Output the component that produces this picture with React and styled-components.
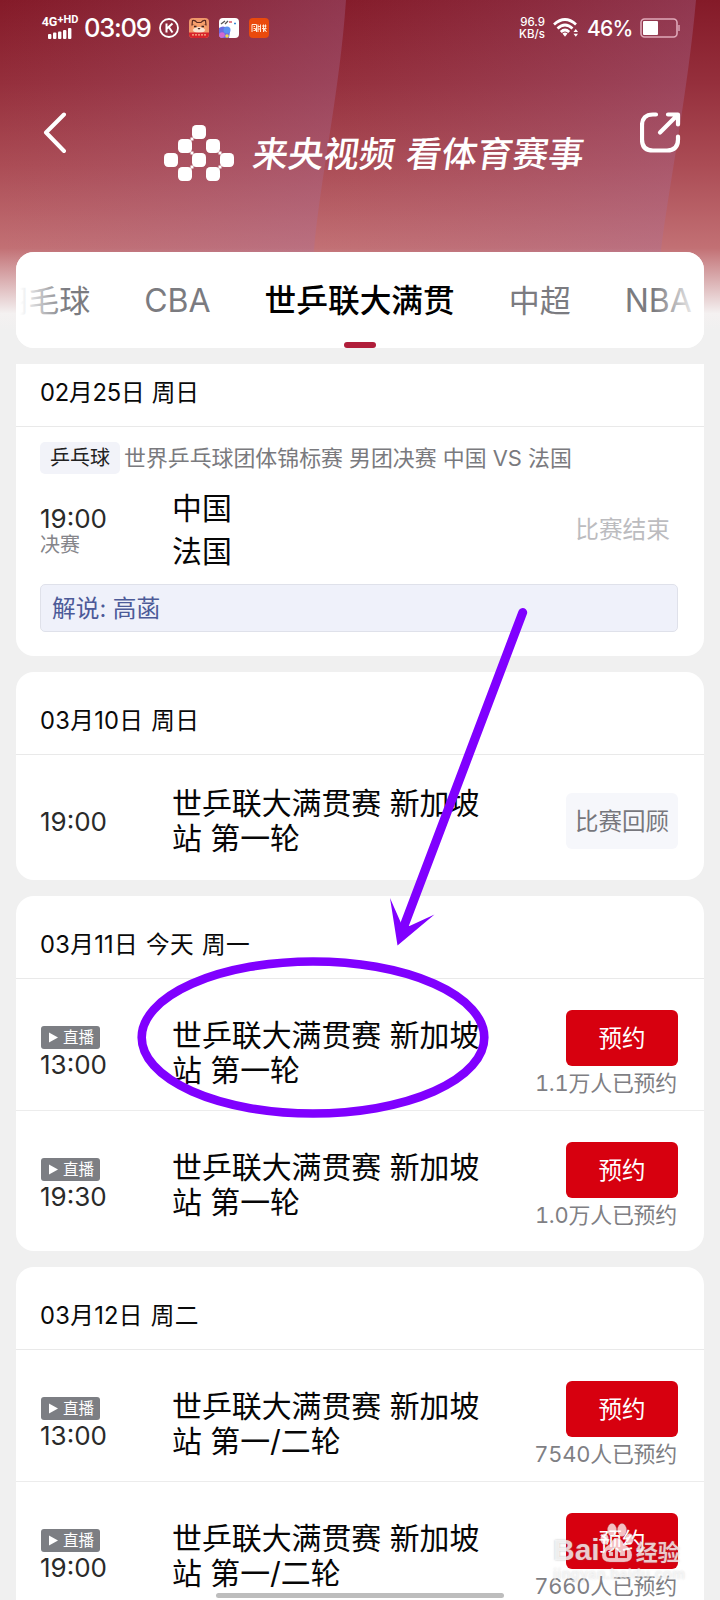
import React from "react"
import styled, { createGlobalStyle, css } from "styled-components"

const GlobalStyle = createGlobalStyle`
  * {
    box-sizing: border-box;
  }
  body {
    margin: 0;
    background: #f0f0f0;
    font-family: Inter, "Noto Sans CJK SC", sans-serif;
    color: #0a0a0a;
  }
`

const Screen = styled.div`
  position: relative;
  width: 720px;
  height: 1600px;
  overflow: hidden;
  display: flex;
  flex-direction: column;
  background: #f0f0f0;
`

const Backdrop = styled.svg`
  position: absolute;
  top: 0;
  left: 0;
`

const StatusBar = styled.div`
  position: relative;
  display: flex;
  align-items: center;
  justify-content: space-between;
  height: 56px;
  padding: 0 40px 0 41px;
  color: #fff;
`

const StatusGroup = styled.div`
  display: flex;
  align-items: center;
  gap: ${(p) => p.$gap}px;
`

const Network = styled.div`
  display: flex;
  flex-direction: column;
  align-items: center;
  width: 38px;
  font: 700 12.5px/12px Roboto, sans-serif;
  white-space: nowrap;
  margin-right: 5px;
`

const NetworkLabel = styled.div`
  display: flex;
  small {
    font-size: 11px;
    line-height: 8px;
  }
`

const Clock = styled.div`
  width: 67px;
  font: 500 25.5px/30px Inter, sans-serif;
  letter-spacing: -1.2px;
  margin-right: 8px;
  white-space: nowrap;
`

const Speed = styled.div`
  font: 500 11.5px/12px Inter, sans-serif;
  text-align: right;
`

const Percent = styled.div`
  font: 500 21px/28px Inter, sans-serif;
  width: 45px;
  letter-spacing: -0.7px;
  padding-top: 1px;
  white-space: nowrap;
`

const Header = styled.header`
  position: relative;
  display: flex;
  align-items: flex-start;
  height: 196px;
  padding: 56px 38px 0 42px;
`

const Brand = styled.div`
  display: flex;
  align-items: flex-start;
  flex: 1;
  padding: 13px 0 0 96px;
`

const Slogan = styled.div`
  margin: 4px 0 0 19px;
  color: #fff;
  font-size: 35.5px;
  line-height: 52px;
  font-weight: 500;
  white-space: nowrap;
  transform: skewX(-8deg);
  word-spacing: 2px;
`

const Tabs = styled.nav`
  position: relative;
  display: flex;
  justify-content: center;
  flex: none;
  gap: 54px;
  height: 96px;
  margin: 0 16px;
  padding-top: 24px;
  border-radius: 18px;
  background: #fff;
  overflow: hidden;
  &::before,
  &::after {
    content: "";
    position: absolute;
    z-index: 1;
    top: 0;
    width: 50px;
    height: 100%;
  }
  &::before {
    left: 0;
    background: linear-gradient(90deg, #fff 8%, rgba(255, 255, 255, 0));
  }
  &::after {
    right: 0;
    background: linear-gradient(270deg, #fff 8%, rgba(255, 255, 255, 0));
  }
`

const Tab = styled.div`
  flex: none;
  position: relative;
  height: 72px;
  font-size: ${(p) => (p.$latin ? 32 : 31)}px;
  line-height: 50px;
  color: #7b7b80;
  &:first-child {
    margin-left: -31px;
  }
  ${(p) =>
    p.$active &&
    css`
      color: #000;
      font-size: 31.7px;
      font-weight: 500;
      &::after {
        content: "";
        position: absolute;
        left: 50%;
        bottom: 0;
        width: 32px;
        height: 6px;
        margin-left: -16px;
        border-radius: 3px;
        background: #b01e3a;
      }
    `}
`

const Schedule = styled.main`
  flex: 1;
  min-height: 0;
  margin: 16px 16px 0;
  overflow: hidden;
`

const Day = styled.section`
  height: ${(p) => p.$height}px;
  margin: ${(p) => (p.$scrolled ? "-20px" : "0")} 0 16px;
  border-radius: 18px;
  background: #fff;
  overflow: hidden;
`

const DayTitle = styled.h2`
  margin: 0;
  height: 83px;
  padding: 32px 24px 0;
  border-bottom: 1px solid #e9e9e9;
  font-size: 23.7px;
  line-height: 34px;
  font-weight: 400;
  letter-spacing: ${(p) => p.$tracking || "-0.2px"};
  word-spacing: 1px;
`

const Match = styled.div`
  display: grid;
  grid-template-columns: 132px 320px 1fr;
  height: ${(p) => p.$height || 131}px;
  padding: 0 26px 0 24px;
  & + & {
    border-top: 1px solid #ececec;
  }
`

const When = styled.div`
  display: flex;
  flex-direction: column;
  align-items: flex-start;
  padding-top: ${(p) => p.$top}px;
`

const Time = styled.div`
  padding-top: 1px;
  font-size: 26px;
  line-height: 30px;
  color: #2a2a2a;
`

const Stage = styled.div`
  font-size: 20px;
  line-height: 22px;
  color: #85858a;
`

const Live = styled.div`
  display: flex;
  align-items: center;
  gap: 5px;
  width: 59px;
  height: 23px;
  padding-left: 8px;
  margin-left: 1px;
  border-radius: 3px;
  background: #7c7e83;
  color: #fff;
  font-size: 15.5px;
  line-height: 24px;
`

const Name = styled.div`
  padding-top: ${(p) => p.$top}px;
  font-size: 29.9px;
  line-height: ${(p) => p.$line || 35}px;
  color: #060606;
  white-space: pre;
`

const Action = styled.div`
  display: flex;
  flex-direction: column;
  align-items: flex-end;
  padding-top: ${(p) => p.$top}px;
`

const Button = styled.div`
  width: 112px;
  height: 56px;
  border-radius: 6px;
  background: ${(p) => (p.$muted ? "#f6f7fb" : "#d7000f")};
  color: ${(p) => (p.$muted ? "#77777d" : "#fff")};
  font-size: 23.5px;
  line-height: 57px;
  text-align: center;
`

const Booked = styled.div`
  padding-right: 1px;
  font-size: 21.9px;
  line-height: 34px;
  font-variant-numeric: tabular-nums;
  letter-spacing: -0.2px;
  color: #7f7f84;
  white-space: nowrap;
`

const Finished = styled.div`
  padding: 2px 8px 0 0;
  font-size: 23.7px;
  line-height: 32px;
  color: #bcbcbf;
`

const EventLine = styled.div`
  display: flex;
  align-items: center;
  gap: 4px;
  padding: 15px 24px 0;
  font-size: 21.9px;
  line-height: 32px;
  color: #7a7a7e;
  white-space: nowrap;
`

const Tag = styled.span`
  width: 80px;
  border-radius: 5px;
  background: #f2f3f9;
  color: #222;
  font-size: 20px;
  text-align: center;
`

const Commentary = styled.div`
  height: 48px;
  margin: 0 26px 0 24px;
  padding-left: 11px;
  border: 1px solid #dfe1ea;
  border-radius: 5px;
  background: #eff1fa;
  color: #4c5a98;
  font-size: 23.7px;
  line-height: 47px;
`

const Annotation = styled.svg`
  position: absolute;
  top: 0;
  left: 0;
`

const Watermark = styled.div`
  position: absolute;
  left: 553px;
  top: 1522px;
  width: 130px;
  color: rgba(255, 255, 255, 0.75);
  text-shadow: 0 0 2px rgba(120, 120, 120, 0.5);
`

const WatermarkRow = styled.div`
  display: flex;
  align-items: flex-end;
  height: 42px;
  font: 700 30px/28px "Liberation Sans", sans-serif;
  span:last-child {
    margin-left: 2px;
    font: 700 22px/27px "Noto Sans CJK SC", sans-serif;
  }
`

const WatermarkUrl = styled.div`
  margin-top: 3px;
  font: 700 14.5px/14px "Liberation Sans", sans-serif;
  letter-spacing: 0.3px;
  color: rgba(255, 255, 255, 0.5);
  text-shadow: 0 0 2px rgba(150, 150, 150, 0.3);
  white-space: nowrap;
`

const HomeBar = styled.div`
  position: absolute;
  left: 216px;
  bottom: 2px;
  width: 288px;
  height: 5px;
  border-radius: 3px;
  background: #bdbdbd;
`

const HeaderBackdrop = () => (
  <Backdrop width="720" height="330" viewBox="0 0 720 330">
    <defs>
      <linearGradient id="base" x1="0" y1="0" x2="0" y2="1">
        <stop offset="0" stopColor="#841a28" />
        <stop offset="0.25" stopColor="#952f3c" />
        <stop offset="0.5" stopColor="#ab4c55" />
        <stop offset="0.75" stopColor="#c27074" />
      </linearGradient>
      <linearGradient id="sheen" x1="0" y1="0" x2="1" y2="0">
        <stop offset="0" stopColor="#a8688c" stopOpacity="0" />
        <stop offset="1" stopColor="#a8709c" stopOpacity="0.34" />
      </linearGradient>
      <linearGradient id="fade" x1="0" y1="0" x2="0" y2="1">
        <stop offset="0" stopColor="#f4f1f1" stopOpacity="0" />
        <stop offset="0.8" stopColor="#f4f1f1" />
        <stop offset="1" stopColor="#f0f0f0" />
      </linearGradient>
    </defs>
    <rect width="720" height="330" fill="url(#base)" />
    <path d="M0 0H346C340 90 320 180 314 250V330H0Z" fill="url(#sheen)" />
    <path d="M346 0H696C688 90 670 180 661 250V330H314V250C320 180 340 90 346 0Z" fill="url(#sheen)" />
    <rect y="248" width="720" height="82" fill="url(#fade)" />
  </Backdrop>
)

const SignalIcon = () => (
  <svg width="24" height="12" viewBox="0 0 24 12" fill="#fff">
    <rect x="0" y="6" width="3.4" height="5" rx="1" />
    <rect x="5" y="4.5" width="3.4" height="6.5" rx="1" />
    <rect x="10" y="3.5" width="3.4" height="7.5" rx="1" />
    <rect x="15" y="2" width="3.4" height="9" rx="1" />
    <rect x="20" y="0" width="3.4" height="11" rx="1" />
  </svg>
)

const CircleKIcon = () => (
  <svg width="20" height="20" viewBox="0 0 20 20" fill="none" stroke="#fff">
    <circle cx="10" cy="10" r="9" strokeWidth="1.8" />
    <path d="M7.5 5.5V14.5M13.5 5.5L8 10.5M9.8 9L13.5 14.5" strokeWidth="2" />
  </svg>
)

const FoxAppIcon = () => (
  <svg width="20" height="20" viewBox="0 0 20 20">
    <rect width="20" height="20" rx="4" fill="#f0986a" />
    <path d="M3 7L3.5 2.5Q6 2 8 4.5H12Q14 2 16.5 2.5L17 7Z" fill="#f7a06c" stroke="#5a2b20" strokeWidth="1.2" />
    <ellipse cx="10" cy="10" rx="7.5" ry="5" fill="#f7a06c" />
    <ellipse cx="10" cy="12" rx="6" ry="3" fill="#fbe3d0" />
    <path d="M5 8.5h2.5M12.5 8.5h2.5" stroke="#3b2220" strokeWidth="1.3" />
    <path d="M8.5 10h3L10 11.8Z" fill="#3b2220" />
    <path d="M0 14.5H20V16Q20 20 16 20H4Q0 20 0 16Z" fill="#d8232b" />
    <path d="M3 16.8h14" stroke="#f6b98c" strokeWidth="1.3" strokeDasharray="2 1" />
  </svg>
)

const PaletteAppIcon = () => (
  <svg width="20" height="20" viewBox="0 0 20 20">
    <rect width="20" height="20" rx="4" fill="#fff" />
    <path d="M0 10Q4 7 8 10L11 14L10 20H4Q0 20 0 16Z" fill="#6a6ce0" />
    <circle cx="8" cy="12" r="3.5" fill="#5a92f0" />
    <circle cx="3" cy="17" r="2.8" fill="#d06ad0" />
    <circle cx="8" cy="18" r="1.8" fill="#f0d84e" />
    <path d="M2 6l4-3M6 6l3-3" stroke="#555" strokeWidth="1.3" />
    <path d="M10 4h3" stroke="#cf3d4c" strokeWidth="1.3" />
    <path d="M15 5.5h2" stroke="#3e8ad8" strokeWidth="1.3" />
  </svg>
)

const OrangeAppIcon = () => (
  <svg width="20" height="20" viewBox="0 0 20 20">
    <rect width="20" height="20" rx="4" fill="#ea4a0c" />
    <path
      d="M3 14V6.5H7.5V14M4.5 8.5h1.5M4.5 10.5h2v2h-2M9 6.5v7.5M9 8.5h2.5M9 11h2.5M11.5 6.5V14M13 8h4.5M13 10.5h4.5M14.5 6.5V14M16.5 6.5v3l-2 4.5M15.5 11l2 3"
      fill="none"
      stroke="#ffe9d8"
      strokeWidth="1"
    />
  </svg>
)

const WifiIcon = () => (
  <svg width="26" height="20" viewBox="0 0 26 20" fill="none" stroke="#fff" strokeWidth="2.7">
    <path d="M1 6.5Q12 -3.5 23 6.5" />
    <path d="M4.5 10.5Q12 3.5 19.5 10.5" />
    <path d="M7.8 14Q12 10 16.2 14" />
    <path d="M9.5 15.5Q12 13.5 14.5 15.5L12 18.8Z" fill="#fff" stroke="none" />
    <path d="M20.5 14L22.8 11L25 14ZM20.5 15.8L22.8 18.8L25 15.8Z" fill="#fff" stroke="none" />
  </svg>
)

const BatteryIcon = () => (
  <svg width="40" height="20" viewBox="0 0 40 20">
    <rect x="1" y="1" width="36" height="18" rx="3.5" fill="none" stroke="#dfa9b9" strokeWidth="1.6" />
    <rect x="3" y="3" width="15" height="14" rx="1" fill="#fff" />
    <path d="M39 7v6" stroke="#dfa9b9" strokeWidth="1.4" />
  </svg>
)

const BackIcon = () => (
  <svg width="26" height="42" viewBox="0 0 26 42" fill="none" stroke="#fff" strokeWidth="4" strokeLinecap="round" strokeLinejoin="round">
    <path d="M22 2.5L4 20.5L22 39" />
  </svg>
)

const ShareIcon = () => (
  <svg width="42" height="42" viewBox="0 0 42 42" fill="none" stroke="#fff" strokeWidth="4.2" strokeLinecap="round" strokeLinejoin="round">
    <path d="M16 2.5H13Q2 2.5 2 13.5V27.5Q2 38.5 13 38.5H27Q38 38.5 38 27.5V24.5" />
    <path d="M20 20.5L37 3.5M28 2.5H38V12.5" />
  </svg>
)

const logoCells = [
  [28, 0],
  [14, 14],
  [42, 14],
  [0, 28],
  [28, 28],
  [56, 28],
  [14, 42],
  [42, 42],
]

const LogoIcon = () => (
  <svg width="70" height="56" viewBox="0 0 70 56" fill="#fff">
    {logoCells.map(([x, y]) => (
      <rect key={`${x}-${y}`} x={x} y={y} width="14" height="14" rx="4.2" />
    ))}
    <path d="M26.5 12.5h3v3h-3zM26.5 26.5h3v3h-3zM54.5 26.5h3v3h-3zM26.5 40.5h3v3h-3zM54.5 40.5h3v3h-3z" />
  </svg>
)

const PlayIcon = () => (
  <svg width="9" height="11" viewBox="0 0 9 11" fill="#fff">
    <path d="M0 0.5L9 5.5L0 10.5Z" />
  </svg>
)

const PawIcon = () => (
  <svg width="34" height="42" viewBox="0 0 34 42" fill="rgba(255,255,255,0.75)" stroke="rgba(150,150,150,0.25)">
    <ellipse cx="4.5" cy="17" rx="4" ry="5.5" />
    <ellipse cx="12" cy="8" rx="4.5" ry="6.5" />
    <ellipse cx="22" cy="8" rx="4.5" ry="6.5" />
    <ellipse cx="29.5" cy="17" rx="4" ry="5.5" />
    <path
      fillRule="evenodd"
      d="M17 16Q21 16 24 22Q32 27 32 33Q32 40 24 40H10Q2 40 2 33Q2 27 10 22Q13 16 17 16ZM13 25V28H9Q6 28 6 31.5Q6 36 9 36H15V25ZM9 30H13V34H9ZM18 28V36H27V28H25V34H20V28Z"
    />
  </svg>
)

const Pointer = () => (
  <Annotation width="720" height="1600" viewBox="0 0 720 1600">
    <ellipse cx="313" cy="1037.5" rx="171.3" ry="76" fill="none" stroke="#8000ff" strokeWidth="8.6" />
    <path d="M522.7 612.5L404 926" stroke="#8000ff" strokeWidth="9" strokeLinecap="round" />
    <path d="M397.5 945.5L390 898L401 923L409.5 926L434.5 914.5Z" fill="#8000ff" />
  </Annotation>
)

const days = [
  {
    title: "03月10日 周日",
    height: 208,
    matches: [{ time: "19:00", name: "世乒联大满贯赛 新加坡\n站 第一轮", replay: true }],
  },
  {
    title: "03月11日 今天 周一",
    height: 355,
    matches: [
      { time: "13:00", name: "世乒联大满贯赛 新加坡\n站 第一轮", booked: "1.1万人已预约" },
      { time: "19:30", name: "世乒联大满贯赛 新加坡\n站 第一轮", booked: "1.0万人已预约" },
    ],
  },
  {
    title: "03月12日 周二",
    height: 355,
    matches: [
      { time: "13:00", name: "世乒联大满贯赛 新加坡\n站 第一/二轮", booked: "7540人已预约" },
      { time: "19:00", name: "世乒联大满贯赛 新加坡\n站 第一/二轮", booked: "7660人已预约" },
    ],
  },
]

const MatchRow = ({ time, name, booked, replay }) => (
  <Match>
    <When $top={replay ? 51 : 47}>
      {replay ? null : (
        <Live>
          <PlayIcon />
          直播
        </Live>
      )}
      <Time>{time}</Time>
    </When>
    <Name $top={replay ? 31 : 39}>{name}</Name>
    <Action $top={replay ? 38 : 31}>
      <Button $muted={replay}>{replay ? "比赛回顾" : "预约"}</Button>
      {booked ? <Booked>{booked}</Booked> : null}
    </Action>
  </Match>
)

const App = () => (
  <Screen>
    <GlobalStyle />
    <HeaderBackdrop />
    <StatusBar>
      <StatusGroup $gap={0}>
        <Network>
          <NetworkLabel>
            4G<small>+HD</small>
          </NetworkLabel>
          <SignalIcon />
        </Network>
        <Clock>03:09</Clock>
        <StatusGroup $gap={10}>
          <CircleKIcon />
          <FoxAppIcon />
          <PaletteAppIcon />
          <OrangeAppIcon />
        </StatusGroup>
      </StatusGroup>
      <StatusGroup $gap={8}>
        <Speed>
          <div>96.9</div>
          <div>KB/s</div>
        </Speed>
        <WifiIcon />
        <Percent>46%</Percent>
        <BatteryIcon />
      </StatusGroup>
    </StatusBar>
    <Header>
      <BackIcon />
      <Brand>
        <LogoIcon />
        <Slogan>来央视频 看体育赛事</Slogan>
      </Brand>
      <ShareIcon />
    </Header>
    <Tabs>
      <Tab>羽毛球</Tab>
      <Tab $latin>CBA</Tab>
      <Tab $active>世乒联大满贯</Tab>
      <Tab>中超</Tab>
      <Tab $latin>NBA</Tab>
    </Tabs>
    <Schedule>
      <Day $height={312} $scrolled>
        <DayTitle>02月25日 周日</DayTitle>
        <EventLine>
          <Tag>乒乓球</Tag>
          世界乒乓球团体锦标赛 男团决赛 中国 VS 法国
        </EventLine>
        <Match $height={110}>
          <When $top={29}>
            <Time>19:00</Time>
            <Stage>决赛</Stage>
          </When>
          <Name $top={13} $line={43}>
            {"中国\n法国"}
          </Name>
          <Action $top={38}>
            <Finished>比赛结束</Finished>
          </Action>
        </Match>
        <Commentary>解说: 高菡</Commentary>
      </Day>
      {days.map((day) => (
        <Day key={day.title} $height={day.height}>
          <DayTitle $tracking="0.3px">{day.title}</DayTitle>
          {day.matches.map((match) => (
            <MatchRow key={match.time} {...match} />
          ))}
        </Day>
      ))}
    </Schedule>
    <Pointer />
    <Watermark>
      <WatermarkRow>
        <span>Bai</span>
        <PawIcon />
        <span>经验</span>
      </WatermarkRow>
      <WatermarkUrl>jingyan.baidu.com</WatermarkUrl>
    </Watermark>
    <HomeBar />
  </Screen>
)

export default App
